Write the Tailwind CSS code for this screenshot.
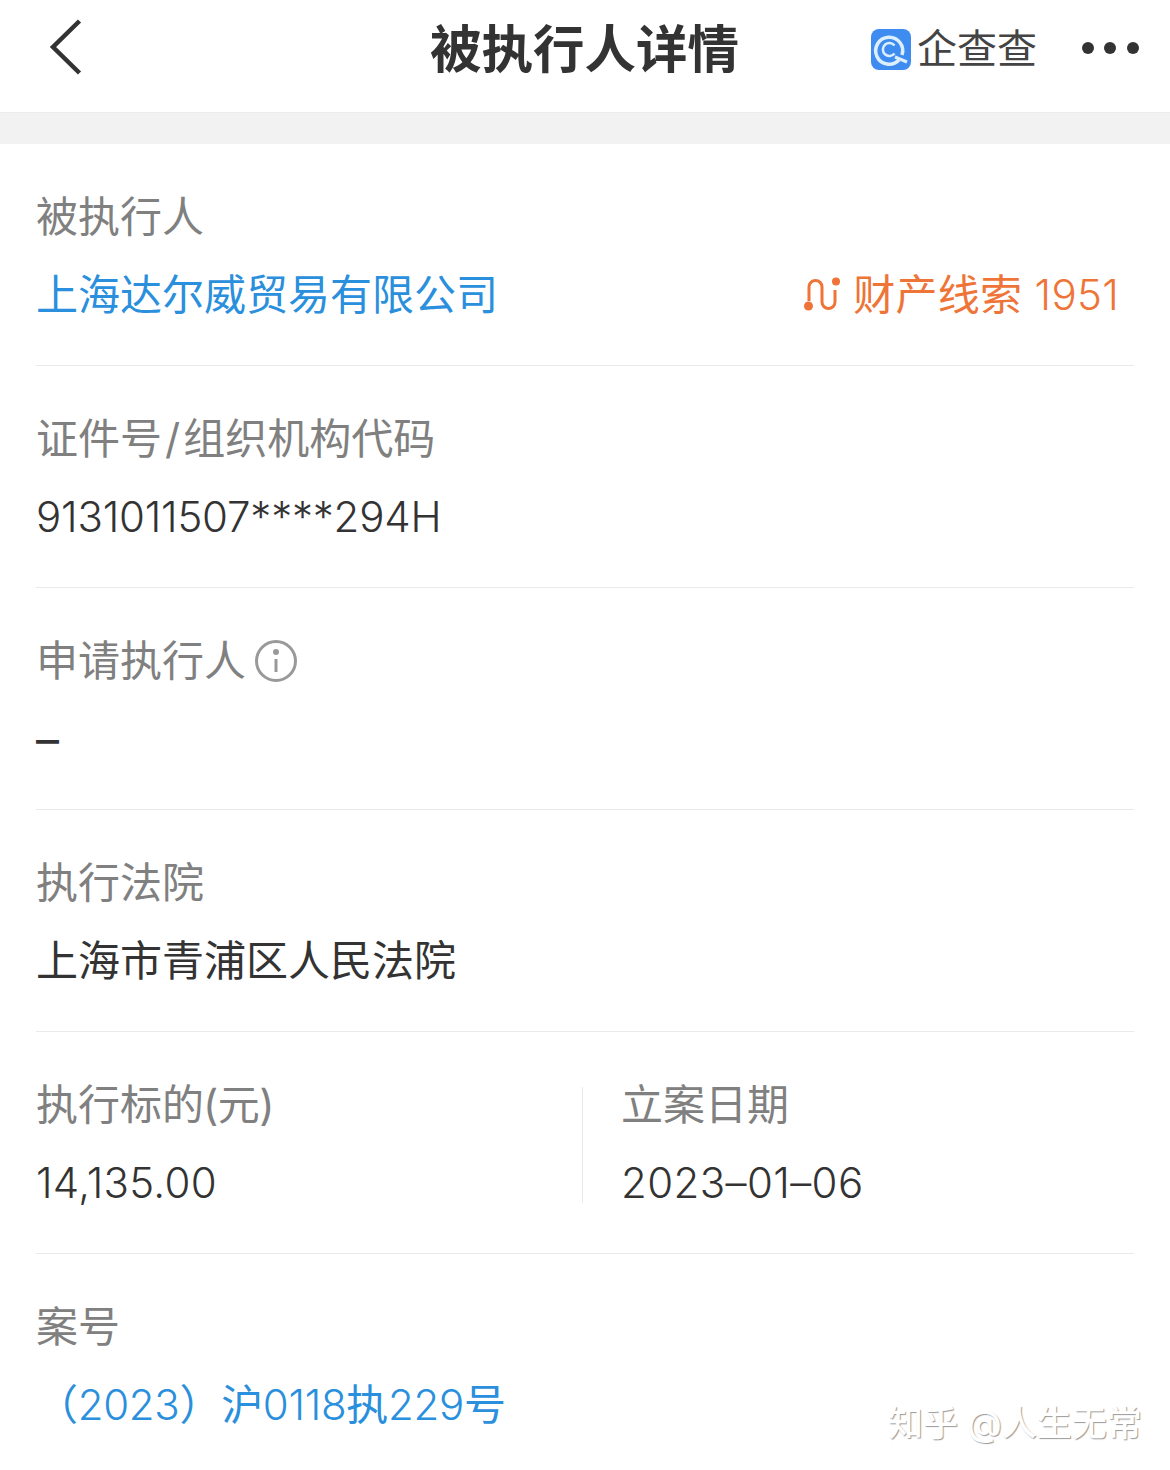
<!DOCTYPE html>
<html lang="zh-CN">

<head>
    <meta charset="UTF-8">
    <meta name="viewport" content="width=device-width, initial-scale=1.0">
    <title>被执行人详情</title>
    <script src="https://cdn.jsdelivr.net/npm/@tailwindcss/browser@4"></script>
</head>

<body class="bg-white font-['Inter','Noto_Sans_CJK_SC',sans-serif]">
    <div class="relative w-[1170px] h-[1470px] overflow-hidden bg-white">
        <!-- header -->
        <header class="relative h-[113px] flex items-center border-b border-[#ececec]">
            <span class="absolute left-[16px] top-[76px] text-[40px] leading-[40px] tracking-[22px] text-black/[0.02]">9a760n5</span>
            <span class="absolute left-[900px] -top-[28px] text-[40px] leading-[40px] tracking-[14px] text-black/[0.015]">0876085</span>
            <svg class="absolute left-[46px] top-[16px]" width="40" height="62" viewBox="0 0 40 62" fill="none">
                <path d="M33.5 5 L7 31 L33.5 57" stroke="#333" stroke-width="4.5" />
            </svg>
            <h1 class="absolute left-[430px] top-[19px] text-[51.5px] leading-[60px] font-bold text-[#333]">被执行人详情</h1>
            <div class="absolute left-[871px] top-[28px] flex items-center">
                <svg width="40" height="41" viewBox="0 0 40 41" fill="none">
                    <rect width="40" height="41" rx="8" fill="#3f8cf0" />
                    <path d="M28 31 A13.5 13.5 0 1 1 31 26" stroke="#dcefff" stroke-width="3.5" />
                    <path d="M23.5 16.5 A6.5 6.5 0 1 0 23.5 24.5" stroke="#dcefff" stroke-width="2.5" />
                    <path d="M24 28 L36 33" stroke="#dcefff" stroke-width="3" />
                </svg>
                <span class="ml-[6px] text-[40px] leading-[42px] text-[#444]">企查查</span>
            </div>
            <div class="absolute left-[1081.5px] top-[42px] flex gap-[10.5px]">
                <span class="w-[12px] h-[12px] rounded-full bg-[#333]"></span>
                <span class="w-[12px] h-[12px] rounded-full bg-[#333]"></span>
                <span class="w-[12px] h-[12px] rounded-full bg-[#333]"></span>
            </div>
        </header>
        <div class="h-[31px] bg-[#f2f2f2]"></div>

        <main class="px-[36px] text-[42px] leading-[50px]">
            <section class="h-[222px] pt-[48px] border-b border-[#eaeaea]">
                <p class="text-[#808080]">被执行人</p>
                <div class="mt-[28px] flex items-center justify-between pr-[15px]">
                    <p class="text-[#2a8fdc]">上海达尔威贸易有限公司</p>
                    <p class="flex items-center text-[#ee7438] tracking-[0.3px]">
                        <svg class="mr-[11px]" width="38" height="36" viewBox="0 0 38 36" fill="none">
                            <path d="M5 24 V10 a6.5 6.5 0 0 1 13 0 V25 a6.5 6.5 0 0 0 13 0 V13" stroke="#ee7438" stroke-width="3" />
                            <circle cx="4.5" cy="29" r="4.5" fill="#ee7438" />
                            <circle cx="32" cy="4.5" r="4" fill="#ee7438" />
                        </svg>
                        <span>财产线索 <span class="font-[350]">1951</span></span>
                    </p>
                </div>
            </section>

            <section class="h-[222px] pt-[48px] border-b border-[#eaeaea]">
                <p class="text-[#808080]">证件号<span class="mx-[3px]">/</span>组织机构代码</p>
                <p class="mt-[28px] text-[#333] font-[350] tracking-[-0.2px]">9131011507****294H</p>
            </section>

            <section class="h-[222px] pt-[48px] border-b border-[#eaeaea]">
                <p class="flex items-center text-[#808080]">
                    申请执行人
                    <svg class="ml-[8px]" width="44" height="44" viewBox="0 0 44 44" fill="none">
                        <circle cx="22" cy="22" r="19.5" stroke="#999" stroke-width="3" />
                        <circle cx="22" cy="13" r="3" fill="#999" />
                        <path d="M22 20 V33" stroke="#999" stroke-width="3" />
                    </svg>
                </p>
                <p class="mt-[28px] text-[46px] text-[#333]">–</p>
            </section>

            <section class="h-[222px] pt-[48px] border-b border-[#eaeaea]">
                <p class="text-[#808080]">执行法院</p>
                <p class="mt-[28px] text-[#333]">上海市青浦区人民法院</p>
            </section>

            <section class="h-[222px] pt-[55px] border-b border-[#eaeaea] flex">
                <div class="w-[547px] h-[116px] border-r border-[#eaeaea]">
                    <p class="-mt-[7px] text-[#808080]">执行标的<span class="-ml-[1px] tracking-[-0.5px]">(元)</span></p>
                    <p class="mt-[28px] text-[#333] font-[350] tracking-[0.3px]">14,135.00</p>
                </div>
                <div class="pl-[38px]">
                    <p class="-mt-[7px] text-[#808080]">立案日期</p>
                    <p class="mt-[28px] text-[#333] font-[350] tracking-[0.4px]">2023–01–06</p>
                </div>
            </section>

            <section class="h-[215px] pt-[48px]">
                <p class="text-[#808080]">案号</p>
                <p class="mt-[28px] text-[#2a8fdc] tracking-[-0.3px]">（<span class="font-[350]">2023</span>）沪<span class="font-[350]">0118</span>执<span class="font-[350]">229</span>号</p>
            </section>
        </main>

        <!-- watermark -->
        <span class="absolute left-[888px] top-[1401px] text-[35px] leading-[44px] font-medium text-white [text-shadow:1px_1px_1px_#999]">知乎 @人生无常</span>
    </div>
</body>

</html>
